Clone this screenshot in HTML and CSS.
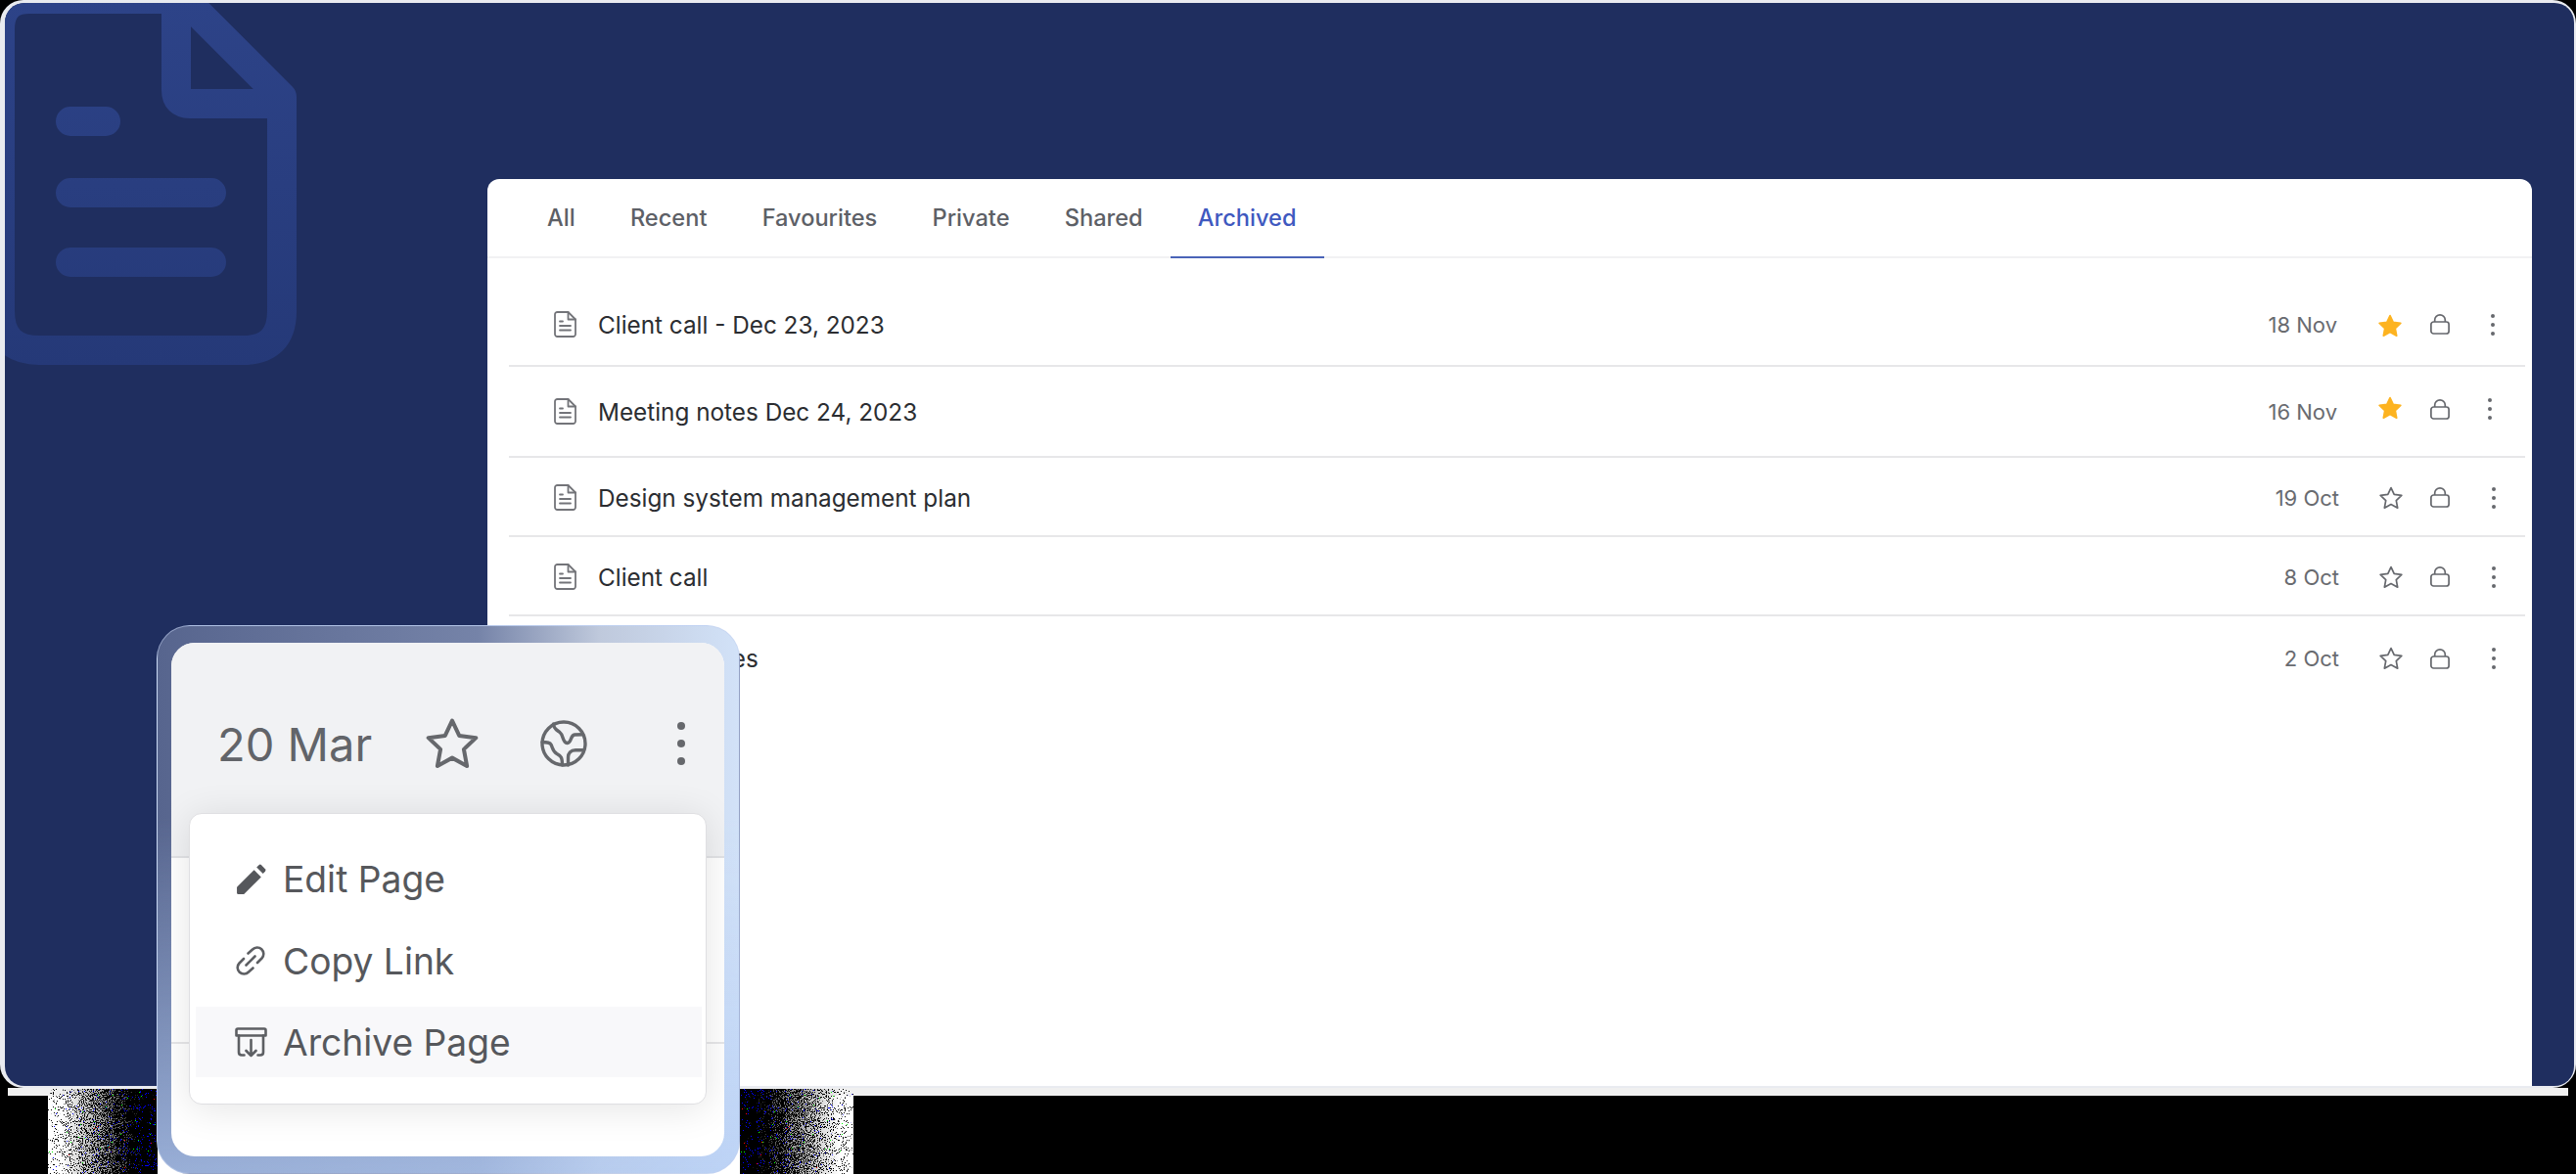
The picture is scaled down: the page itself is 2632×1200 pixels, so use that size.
FILE: index.html
```html
<!DOCTYPE html>
<html lang="en">
<head>
<meta charset="utf-8">
<title>Pages</title>
<link rel="stylesheet" href="styles.css">
</head>
<body>
<svg class="defs" width="0" height="0" aria-hidden="true">
  <defs>
    <symbol id="i-doc" viewBox="0 0 23 27">
      <path d="M3.5 1H14.5L22 8.5V23.5A2.5 2.5 0 0 1 19.5 26H3.5A2.5 2.5 0 0 1 1 23.5V3.5A2.5 2.5 0 0 1 3.5 1Z"/>
      <path d="M14.5 1V8.5H22M6 10.5H9M6 15H17M6 19.5H17"/>
    </symbol>
    <symbol id="i-star" viewBox="0 0 24 24">
      <path d="M12 1.6 15.2 8.4 22.8 9.4 17.3 14.6 18.7 22.2 12 18.5 5.3 22.2 6.7 14.6 1.2 9.4 8.8 8.4Z"/>
    </symbol>
    <symbol id="i-lock" viewBox="0 0 20 21">
      <rect x=".9" y="8" width="18.2" height="12" rx="2.6"/>
      <path d="M4.7 8V5.9A5.3 5 0 0 1 15.3 5.9V8"/>
    </symbol>
    <symbol id="i-dots" viewBox="0 0 4 22">
      <circle cx="2" cy="2" r="2"/><circle cx="2" cy="11" r="2"/><circle cx="2" cy="20" r="2"/>
    </symbol>
    <linearGradient id="doc-fade" gradientUnits="userSpaceOnUse" x1="0" y1="0" x2="0" y2="375">
      <stop offset="0" stop-color="#2d4388"/>
      <stop offset="1" stop-color="#253978"/>
    </linearGradient>
    <linearGradient id="fade-in" x1="0" y1="0" x2="1" y2="0">
      <stop offset="0" stop-color="#000" stop-opacity=".33"/>
      <stop offset=".6" stop-color="#000" stop-opacity=".58"/>
      <stop offset="1" stop-color="#000" stop-opacity=".8"/>
    </linearGradient>
    <linearGradient id="fade-out" x1="1" y1="0" x2="0" y2="0">
      <stop offset="0" stop-color="#000" stop-opacity=".33"/>
      <stop offset=".6" stop-color="#000" stop-opacity=".58"/>
      <stop offset="1" stop-color="#000" stop-opacity=".8"/>
    </linearGradient>
    <linearGradient id="haze-in" x1="0" y1="0" x2="1" y2="0">
      <stop offset=".12" stop-color="#777" stop-opacity="0"/>
      <stop offset=".5" stop-color="#666" stop-opacity=".6"/>
      <stop offset=".85" stop-color="#181818" stop-opacity="1"/>
    </linearGradient>
    <linearGradient id="haze-out" x1="1" y1="0" x2="0" y2="0">
      <stop offset=".12" stop-color="#777" stop-opacity="0"/>
      <stop offset=".5" stop-color="#666" stop-opacity=".6"/>
      <stop offset=".85" stop-color="#181818" stop-opacity="1"/>
    </linearGradient>
    <filter id="speck" x="0" y="0" width="1" height="1" color-interpolation-filters="sRGB">
      <feTurbulence type="fractalNoise" baseFrequency="0.93" numOctaves="2" seed="7" result="t"/>
      <feComponentTransfer in="t" result="color">
        <feFuncR type="discrete" tableValues="0 0 0 0 0 0 0 0 1 1"/>
        <feFuncG type="discrete" tableValues="0 0 0 0 0 0 0 0 1 1"/>
        <feFuncB type="discrete" tableValues="0 0 0 0 0 0 0 1 1 1"/>
        <feFuncA type="linear" slope="0" intercept="1"/>
      </feComponentTransfer>
      <feColorMatrix in="t" type="matrix" values="0 0 0 0 0  0 0 0 0 0  0 0 0 0 0  0 1 0 0 0" result="na"/>
      <feComposite in="SourceAlpha" in2="na" operator="arithmetic" k1="0" k2="1" k3="1" k4="-1" result="sum"/>
      <feComponentTransfer in="sum" result="mask"><feFuncA type="linear" slope="30" intercept="0"/></feComponentTransfer>
      <feComposite in="color" in2="mask" operator="in"/>
    </filter>
  </defs>
</svg>

<main class="stage">
  <div class="frame">
    <section class="panel">
      <svg class="watermark" width="320" height="380" viewBox="0 0 320 380" aria-hidden="true">
        <path class="wm" d="M30 -1H188L288 99V318Q288 358 248 358H40Q0 358 0 318V30Q0 -1 30 -1Z"/>
        <path class="wm" d="M180 -1V92Q180 106 194 106H280"/>
        <path class="wm" d="M72 124H108M72 197H216M72 268H216"/>
      </svg>
      <div class="card">
        <nav class="tabs">
          <a class="tab">All</a>
          <a class="tab">Recent</a>
          <a class="tab">Favourites</a>
          <a class="tab">Private</a>
          <a class="tab">Shared</a>
          <a class="tab tab-active">Archived</a>
        </nav>
        <ul class="list">
          <li class="row row-1">
            <svg class="ic-doc"><use href="#i-doc"/></svg>
            <span class="name">Client call - Dec 23, 2023</span>
            <span class="date">18 Nov</span>
            <svg class="ic-star on"><use href="#i-star"/></svg>
            <svg class="ic-lock"><use href="#i-lock"/></svg>
            <span class="more"><svg class="ic-dots"><use href="#i-dots"/></svg></span>
          </li>
          <li class="row row-2">
            <svg class="ic-doc"><use href="#i-doc"/></svg>
            <span class="name">Meeting notes Dec 24, 2023</span>
            <span class="date">16 Nov</span>
            <svg class="ic-star on"><use href="#i-star"/></svg>
            <svg class="ic-lock"><use href="#i-lock"/></svg>
            <span class="more"><svg class="ic-dots"><use href="#i-dots"/></svg></span>
          </li>
          <li class="row row-3">
            <svg class="ic-doc"><use href="#i-doc"/></svg>
            <span class="name">Design system management plan</span>
            <span class="date">19 Oct</span>
            <svg class="ic-star"><use href="#i-star"/></svg>
            <svg class="ic-lock"><use href="#i-lock"/></svg>
            <span class="more"><svg class="ic-dots"><use href="#i-dots"/></svg></span>
          </li>
          <li class="row row-3">
            <svg class="ic-doc"><use href="#i-doc"/></svg>
            <span class="name">Client call</span>
            <span class="date">8 Oct</span>
            <svg class="ic-star"><use href="#i-star"/></svg>
            <svg class="ic-lock"><use href="#i-lock"/></svg>
            <span class="more"><svg class="ic-dots"><use href="#i-dots"/></svg></span>
          </li>
          <li class="row row-3 row-last">
            <svg class="ic-doc"><use href="#i-doc"/></svg>
            <span class="name">Meeting notes</span>
            <span class="date">2 Oct</span>
            <svg class="ic-star"><use href="#i-star"/></svg>
            <svg class="ic-lock"><use href="#i-lock"/></svg>
            <span class="more"><svg class="ic-dots"><use href="#i-dots"/></svg></span>
          </li>
        </ul>
      </div>
    </section>
  </div>
  <div class="strip"></div>
  <div class="glitch">
    <svg class="noise noise-l" width="112" height="87" aria-hidden="true"><rect width="112" height="87" fill="url(#haze-in)"/><rect width="112" height="87" fill="url(#fade-in)" filter="url(#speck)"/></svg>
    <svg class="noise noise-r" width="116" height="87" aria-hidden="true"><rect width="116" height="87" fill="url(#haze-out)"/><rect width="116" height="87" fill="url(#fade-out)" filter="url(#speck)"/></svg>
  </div>

  <aside class="popup">
    <div class="popup-inner">
      <header class="pop-head">
        <span class="pop-date">20 Mar</span>
        <svg class="pop-star"><use href="#i-star"/></svg>
        <svg class="pop-globe" viewBox="0 0 48 48" aria-hidden="true">
          <circle cx="24" cy="24" r="22"/>
          <path d="M13.5 4C13.5 9 17 10 20 12.5C24 15.5 22.5 23 27.5 23.5C32 24 30.5 15.5 35 15C38 14.7 41 14.7 43.5 14.7"/>
          <path d="M2 22.5C5 22.5 9.5 22.5 11 25C13 29 12.5 32 17 34.5C21 36.5 22.5 38 22.5 46"/>
          <path d="M43.5 30.7H36C31 30.7 28.5 34 28.5 38V46"/>
        </svg>
        <svg class="pop-dots"><use href="#i-dots"/></svg>
      </header>
      <div class="pop-rest"></div>
      <div class="menu">
        <div class="menu-item">
          <span class="menu-ic"><svg class="ic-pencil" viewBox="0 0 30 30" aria-hidden="true"><path d="M1 23 18 6 25 13 8 30H2.5Q1 30 1 28.5Z"/><path d="M20.5 3.5 22.8 1.2Q24 0 25.2 1.2L29 5Q30 6.2 29 7.4L26.8 9.6Z"/></svg></span>
          <span>Edit Page</span>
        </div>
        <div class="menu-item">
          <span class="menu-ic"><svg class="ic-line ic-link" viewBox="0 0 30 30" aria-hidden="true"><path d="M12.5 7.5 17 3.5A6.5 6.5 0 0 1 26.5 12.5L22 17"/><path d="M17.5 22.5 13 26.5A6.5 6.5 0 0 1 3.5 17.5L8 13"/><path d="M10.5 19.5 19.5 10.5"/></svg></span>
          <span>Copy Link</span>
        </div>
        <div class="menu-item menu-item-hot">
          <span class="menu-ic"><svg class="ic-line ic-archive" viewBox="0 0 33 31" aria-hidden="true"><path d="M3 1.5H30Q31.5 1.5 31.5 3V8.5H1.5V3Q1.5 1.5 3 1.5Z"/><path d="M4 8.5V25.5Q4 28.5 7 28.5H9.5M29 8.5V25.5Q29 28.5 26 28.5H23.5"/><path d="M16.5 13V29M11.5 24 16.5 29 21.5 24"/></svg></span>
          <span>Archive Page</span>
        </div>
      </div>
    </div>
  </aside>
</main>
</body>
</html>
```

FILE: styles.css
```css
* { box-sizing: border-box; }
html, body { margin: 0; padding: 0; }
body {
  width: 2632px;
  height: 1200px;
  overflow: hidden;
  background: #000;
  font-family: Inter, "Liberation Sans", sans-serif;
}
.defs { position: absolute; }
.stage { position: relative; width: 2632px; height: 1200px; overflow: hidden; }

/* outer rim and navy canvas */
.frame {
  height: 1112px;
  padding: 3px 2px 2px 5px;
  background: #e9ebf0;
  border-radius: 24px;
}
.panel {
  position: relative;
  height: 1107px;
  padding: 180px 43px 0 493px;
  background: #1f2e5f;
  border-radius: 20px;
  overflow: hidden;
}
.watermark { position: absolute; left: -5px; top: -3px; }
.wm { fill: none; stroke: url(#doc-fade); stroke-width: 30; stroke-linecap: round; stroke-linejoin: round; }
.strip { height: 8px; margin-left: 8px; width: 2616px; background: #f0f0f0; }
.glitch {
  position: relative;
  width: 823px;
  height: 80px;
  margin-left: 49px;
  background: #fff;
}
.noise { position: absolute; top: -7px; }
.noise-l { left: 0; }
.noise-r { right: 0; }

/* card */
.card {
  position: relative;
  height: 100%;
  background: #fff;
  border-radius: 12px 12px 0 0;
}
.tabs {
  display: flex;
  height: 81px;
  padding-left: 33px;
  border-bottom: 2px solid #f1f1f3;
}
.tab {
  padding: 0 28.1px;
  height: 81px;
  line-height: 80px;
  font-size: 23.6px;
  font-weight: 500;
  color: #5d6066;
}
.tab-active {
  color: #3f59bf;
  border-bottom: 2px solid #4a64b8;
}
.list {
  display: grid;
  grid-template-rows: 111px 93px 81px 81px 84px;
  margin: 0;
  padding: 0 7px 0 22px;
  list-style: none;
}
.row {
  display: flex;
  align-items: center;
  padding-left: 46px;
  border-bottom: 2px solid #e7e7e9;
}
.row-1 { padding-top: 26px; }
.row-3 { padding-top: 2px; }
.row-last { border-bottom: 0; }
.ic-doc { width: 23px; height: 27px; fill: none; stroke: #737479; stroke-width: 1.8; stroke-linecap: round; stroke-linejoin: round; }
.name { flex: 1; margin-left: 22px; font-size: 24.3px; color: #2b2d31; }
.date { width: 90px; text-align: right; font-size: 22px; color: #696b70; }
.ic-star { width: 24px; height: 24px; margin-left: 42px; fill: none; stroke: #66686d; stroke-width: 1.7; stroke-linejoin: round; }
.ic-star.on { fill: #fdb320; stroke: #fdb320; }
.ic-lock { width: 20px; height: 21px; margin-left: 29px; fill: none; stroke: #66686d; stroke-width: 1.7; }
.more { display: flex; justify-content: center; width: 20px; margin-left: 34px; margin-right: 23px; }
.ic-dots { width: 4px; height: 22px; fill: #66686d; }

.row-1 .ic-star { margin-top: 3px; }
.row-2 .ic-star { margin-top: -7px; }
.row-2 .ic-lock, .row-2 .ic-dots { margin-top: -5px; }
.row-2 .ic-dots { margin-left: -6px; }
.row-3 .ic-star { margin-left: 41px; margin-right: -1px; }
.row-3 .ic-dots { margin-left: 2px; }

/* floating popup */
.popup {
  position: absolute;
  left: 160px;
  top: 639px;
  width: 596px;
  height: 561px;
  padding: 17px 15px 17px 14px;
  border-radius: 34px;
  border: 1px solid rgba(195, 210, 240, .55);
  background:
    linear-gradient(180deg, rgba(180, 205, 245, 0) 35%, rgba(180, 205, 245, .7) 100%),
    linear-gradient(90deg, #57658e 0%, #7583a8 55%, #bfc9dc 76%, #d2e2f8 100%);
}
.popup-inner {
  position: relative;
  height: 100%;
  border-radius: 24px;
  background: #fff;
  overflow: hidden;
}
.pop-head {
  display: flex;
  align-items: center;
  height: 220px;
  padding: 0 0 13px 47px;
  background: #f1f2f4;
  border-bottom: 2px solid #e2e3e6;
}
.pop-date { font-size: 47px; color: #626469; width: 156px; margin-top: 2px; white-space: nowrap; }
.pop-star { width: 54px; height: 54px; margin-left: 57px; fill: none; stroke: #66686c; stroke-width: 1.8; stroke-linejoin: round; }
.pop-globe { width: 48px; height: 48px; margin-left: 63px; fill: none; stroke: #66686c; stroke-width: 3.4; stroke-linecap: round; }
.pop-dots { width: 8px; height: 44px; margin-left: 92px; fill: #66686c; }
.pop-rest { height: 190px; border-bottom: 2px solid #e7e7e9; }

.menu {
  position: absolute;
  left: 18px;
  top: 174px;
  width: 529px;
  height: 298px;
  padding: 24px 4px 0 6px;
  background: #fff;
  border: 1px solid #dfdfe2;
  border-radius: 13px;
  box-shadow: 0 4px 38px rgba(0, 0, 0, .11);
}
.menu-item {
  display: flex;
  align-items: center;
  height: 84px;
  font-size: 37.2px;
  color: #56585c;
}
.menu-item-hot { height: 72px; margin-top: 5px; background: #f8f8fa; }
.menu-ic { display: flex; justify-content: center; width: 89px; padding-left: 23px; }
.ic-pencil { width: 31px; height: 31px; fill: #55575b; }
.ic-line { fill: none; stroke: #5d5f63; stroke-width: 2.6; stroke-linecap: round; stroke-linejoin: round; }
.ic-link { width: 30px; height: 30px; }
.ic-archive { width: 33px; height: 31px; }
```
